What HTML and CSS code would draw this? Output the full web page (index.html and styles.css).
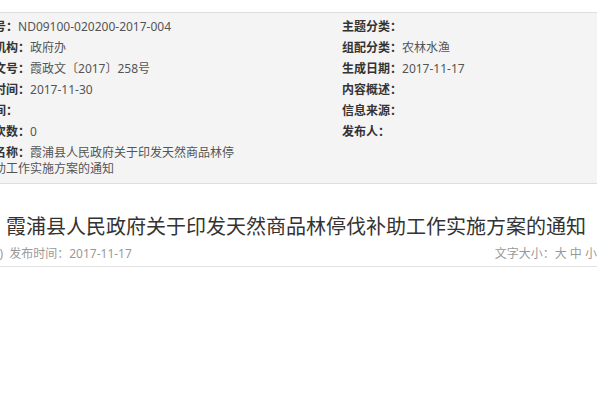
FILE: index.html
```html
<!DOCTYPE html>
<html lang="zh-CN">
<head>
    <meta charset="UTF-8">
    <meta name="viewport" content="width=device-width, initial-scale=1.0">
    <title>霞浦县人民政府关于印发天然商品林停伐补助工作实施方案的通知</title>
    <link rel="stylesheet" href="styles.css">
</head>
<body>
    <div class="page">
        <ul class="info">
            <li><b>索引号：</b>ND09100-020200-2017-004</li>
            <li><b>主题分类：</b></li>
            <li><b>发布机构：</b>政府办</li>
            <li><b>组配分类：</b>农林水渔</li>
            <li><b>发文文号：</b>霞政文〔2017〕258号</li>
            <li><b>生成日期：</b>2017-11-17</li>
            <li><b>成文时间：</b>2017-11-30</li>
            <li><b>内容概述：</b></li>
            <li><b>时　间：</b></li>
            <li><b>信息来源：</b></li>
            <li><b>访问次数：</b>0</li>
            <li><b>发布人：</b></li>
            <li><b>文件名称：</b>霞浦县人民政府关于印发天然商品林停伐补助工作实施方案的通知</li>
        </ul>

        <h1 class="title">霞浦县人民政府关于印发天然商品林停伐补助工作实施方案的通知</h1>

        <div class="meta">
            <div class="meta-left">
                <span class="hits">(0)</span>
                <span>发布时间：2017-11-17</span>
            </div>
            <div class="meta-right">
                文字大小：<a href="#">大</a> <a href="#">中</a> <a href="#">小</a>
            </div>
        </div>
    </div>
</body>
</html>
```

FILE: styles.css
```css
body {
    margin: 0;
    padding: 0;
    overflow: hidden;
    background: #fff;
    font-family: "Noto Sans", "Noto Sans CJK SC", sans-serif;
    font-size: 12px;
    color: #555;
}
.page {
    width: 676px;
    margin-left: -42px;
    padding-top: 12px;
}
.info {
    list-style: none;
    margin: 0;
    padding: 6px 0 6px 12px;
    background-color: #f4f4f4;
    border-top: 1px solid #dedede;
    border-bottom: 1px solid #dedede;
    display: grid;
    grid-template-columns: 270px 1fr;
    column-gap: 102px;
    row-gap: 5px;
}
.info li {
    line-height: 16px;
}
.info b {
    color: #333;
    font-weight: bold;
}
.title {
    margin: 28px 0 0;
    font-size: 20px;
    font-weight: normal;
    line-height: 30px;
    color: #333;
    text-align: center;
}
.meta {
    display: flex;
    justify-content: space-between;
    line-height: 24px;
    padding: 0 37px 0 31px;
    border-bottom: 1px solid #e2e2e2;
    color: #999;
}
.hits {
    margin-right: 3px;
}
.meta-right a {
    color: #999;
    text-decoration: none;
}
```
